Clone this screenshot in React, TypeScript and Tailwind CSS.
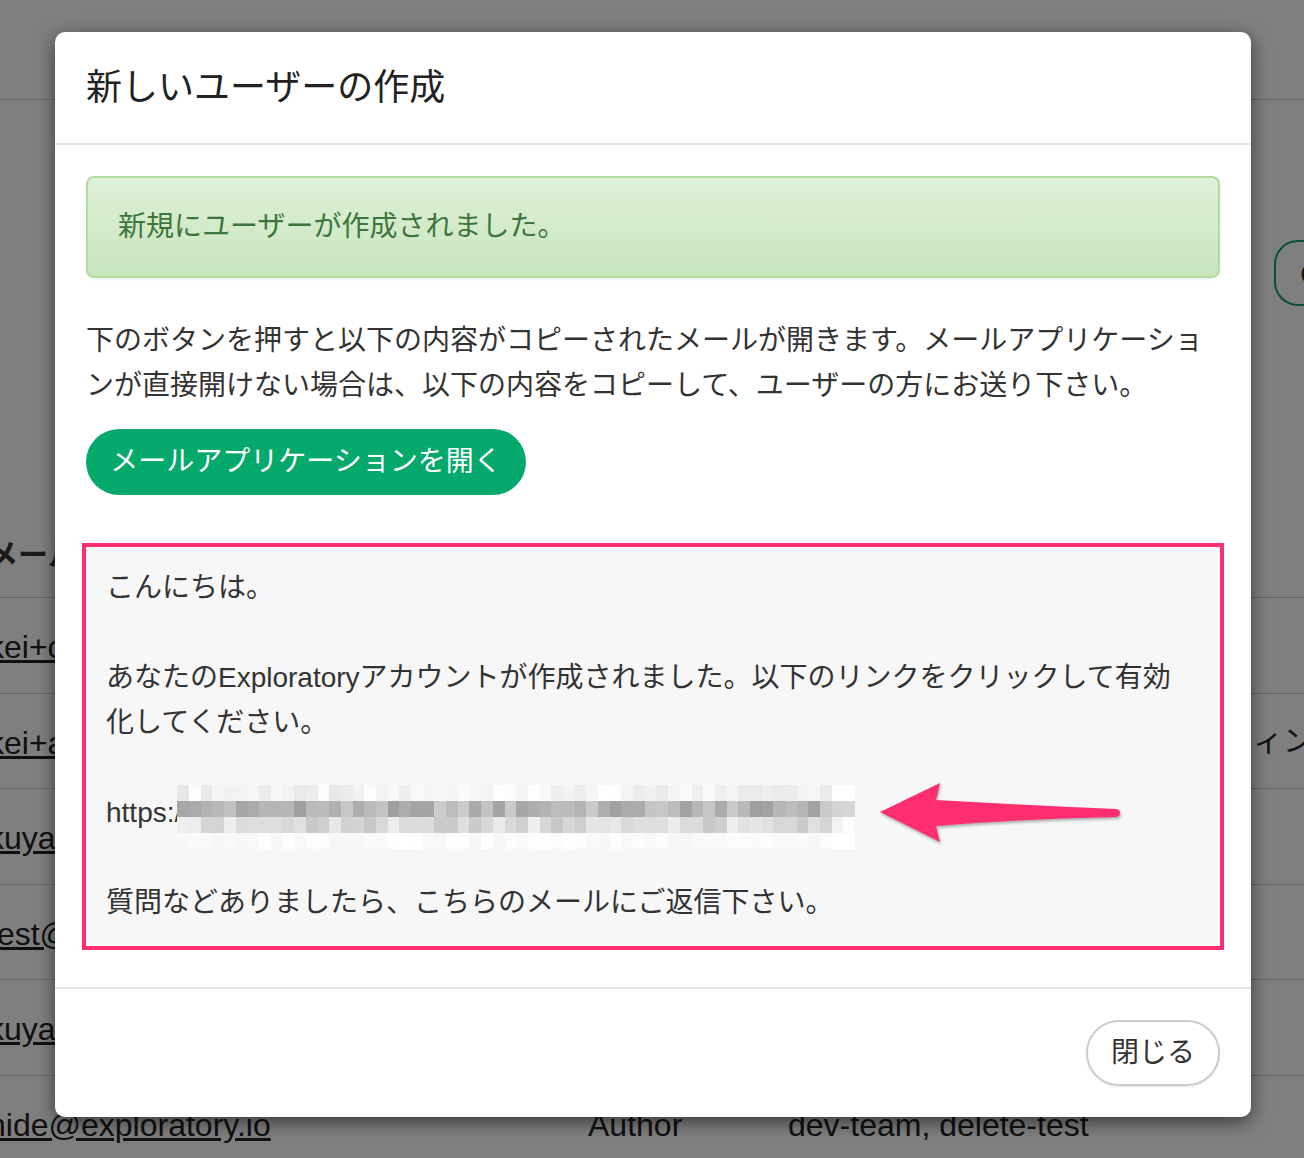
const rows = [
  { email: 'kei+c1@exploratory.io', role: 'Admin', team: 'dev-team', extra: '' },
  { email: 'kei+a2@exploratory.io', role: 'Author', team: 'dev-team', extra: 'ウィンドウ' },
  { email: 'kuya+t@exploratory.io', role: 'Author', team: 'dev-team', extra: '' },
  { email: 'test@exploratory.io', role: 'Viewer', team: 'delete-test', extra: '' },
  { email: 'kuya@exploratory.io', role: 'Author', team: 'dev-team', extra: '' },
  { email: 'hide@exploratory.io', role: 'Author', team: 'dev-team, delete-test', extra: '' },
];

// pixelated (blurred) link
const mosaic = [0, 1, 2, 3].map((r) =>
  Array.from({ length: 58 }, (_, c) => {
    const n = Math.abs(Math.sin(c * 12.9898 + r * 78.233) * 43758.5453) % 1;
    let v = 0;
    if (r === 0) v = 232 + n * 23;
    if (r === 1) v = 158 + n * 48;
    if (r === 2) v = 198 + n * 42;
    if (r === 3) v = 246 + n * 9;
    if (c >= 56) v = Math.min(255, v + 40);
    return Math.round(Math.min(255, v));
  })
);

function Arrow() {
  return (
    <svg
      width="252"
      height="70"
      viewBox="0 0 252 70"
      className="absolute left-[788px] top-[232px] drop-shadow-[1px_2px_1.5px_rgba(0,0,0,0.3)]"
    >
      <path
        d="M6 33 L66 4 L62 21 Q150 26 242 30 Q246 30.5 246 34 Q246 37.5 242 38 Q150 40 62 47 L66 63 Z"
        fill="#ff2e6e"
      />
    </svg>
  );
}

export default function App() {
  return (
    <div className="relative w-full h-[1158px] overflow-hidden bg-white text-[#333] font-['Liberation_Sans','Noto_Sans_CJK_JP',sans-serif]">
      {/* page behind the modal */}
      <div className="h-[100px] border-b border-[#ccc]" />
      <div className="mt-[140px] flex justify-end">
        <div className="mr-[-130px] h-[66px] w-[160px] rounded-[24px] border-2 border-[#14a06e] pl-[24px] flex items-center text-[30px] text-[#333]">
          Create
        </div>
      </div>
      <div className="mt-[206px] -ml-[12px]">
        <div className="h-[86px] border-b border-[#ccc] flex items-center text-[30px] font-bold whitespace-nowrap">
          メールアドレス
        </div>
        {rows.map((row) => (
          <div key={row.email} className="h-[95.5px] border-b border-[#ccc] flex items-center text-[32px] text-[#222] whitespace-nowrap">
            <div className="w-[600px] shrink-0 underline pt-[4px]">{row.email}</div>
            <div className="w-[200px] shrink-0 pt-[4px]">{row.role}</div>
            <div className="w-[435px] shrink-0 pt-[4px]">{row.team}</div>
            <div className="text-[30px] shrink-0">{row.extra}</div>
          </div>
        ))}
      </div>

      {/* overlay */}
      <div className="absolute inset-0 bg-black/50 pt-[32px] pl-[55px]">
        <div className="w-[1196px] rounded-[10px] bg-white shadow-[0_5px_18px_rgba(0,0,0,0.55)]">
          <div className="h-[113px] px-[31px] flex items-center border-b-2 border-[#e5e5e5]">
            <h4 className="text-[36px] text-[#222] leading-none">新しいユーザーの作成</h4>
          </div>

          <div className="px-[31px] pt-[31px] pb-[37px]">
            <div className="h-[102px] rounded-[8px] border-2 border-[#b2dba1] bg-gradient-to-b from-[#dff0d8] to-[#c8e5bc] px-[30px] flex items-center text-[28px] text-[#3c763d] shadow-[0_2px_3px_rgba(0,0,0,0.05)]">
              新規にユーザーが作成されました。
            </div>

            <p className="mt-[40px] text-[28px] leading-[45px]">
              下のボタンを押すと以下の内容がコピーされたメールが開きます。メールアプリケーショ
              <br />
              ンが直接開けない場合は、以下の内容をコピーして、ユーザーの方にお送り下さい。
            </p>

            <button className="mt-[21px] h-[66px] w-[440px] rounded-full bg-[#04a96b] text-white text-[28px] flex items-center justify-center">
              メールアプリケーションを開く
            </button>

            <div className="relative mt-[48px] -mx-1 border-4 border-[#ff2e6e] bg-[#f7f7f7] px-[20px] pt-[18px] pb-[21px] text-[28px] leading-[45px]">
              <div>こんにちは。</div>
              <div className="h-[45px]" />
              <div>
                あなたのExploratoryアカウントが作成されました。以下のリンクをクリックして有効
                <br />
                化してください。
              </div>
              <div className="h-[45px]" />
              <div className="h-[45px] flex items-center">
                <span>https:/</span>
                <div className="-ml-[5px] mt-[8px] flex flex-col">
                  {mosaic.map((line, r) => (
                    <div key={r} className="flex h-[16px]">
                      {line.map((v, c) => (
                        <div
                          key={c}
                          className="w-[11.7px] h-full"
                          style={{ backgroundColor: `rgb(${v},${v},${v})` }}
                        />
                      ))}
                    </div>
                  ))}
                </div>
              </div>
              <div className="h-[45px]" />
              <div>質問などありましたら、こちらのメールにご返信下さい。</div>
              <Arrow />
            </div>
          </div>

          <div className="border-t-2 border-[#e5e5e5] px-[31px] py-[31px] flex justify-end">
            <button className="h-[66px] w-[134px] rounded-full border-2 border-[#ccc] bg-white text-[28px] text-[#333] shadow-[0_1px_2px_rgba(0,0,0,0.1)]">
              閉じる
            </button>
          </div>
        </div>
      </div>
    </div>
  );
}
